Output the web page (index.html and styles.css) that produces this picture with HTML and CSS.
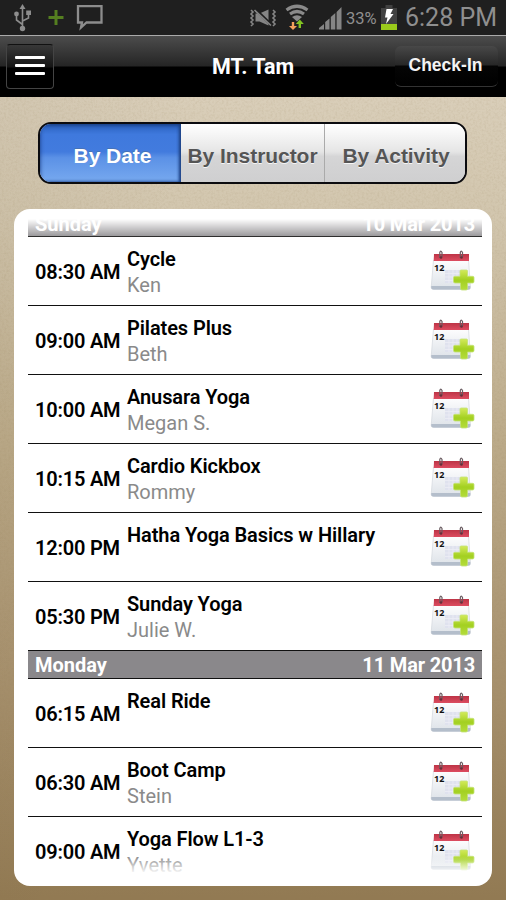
FILE: index.html
```html
<!DOCTYPE html>
<html lang="en">
<head>
<meta charset="utf-8">
<title>MT. Tam</title>
<link rel="stylesheet" href="styles.css">
</head>
<body>
<svg class="defs" aria-hidden="true">
  <defs>
    <linearGradient id="page" x1="0" y1="0" x2="0" y2="1"><stop offset="0" stop-color="#fdfdfe"/><stop offset="1" stop-color="#dde2e8"/></linearGradient>
    <linearGradient id="red" x1="0" y1="0" x2="0" y2="1"><stop offset="0" stop-color="#bd3446"/><stop offset="1" stop-color="#dc4c60"/></linearGradient>
    <linearGradient id="green" x1="0" y1="0" x2="0" y2="1"><stop offset="0" stop-color="#d3ea5a"/><stop offset=".5" stop-color="#a3d021"/><stop offset="1" stop-color="#b4dc3c"/></linearGradient>
    <symbol id="calendar" viewBox="0 0 46 44">
      <path d="M4.500 11H39.500L41.500 38.500Q41.500 40.500 39.500 40.500H4.500Q2.200 40.500 2.200 38.500Z" fill="url(#page)" stroke="#d3d7dc" stroke-width=".7"/>
      <path d="M2.300 37H41.300V38.500Q41.500 40.500 39.500 40.500H4.500Q2.200 40.500 2.200 38.500Z" fill="#b4becb"/>
      <path d="M16 21H36V34H16Z" fill="#dfe2ee"/>
      <path d="M16 24.500H36M16 28H36M16 31.500H36M20 21V34M24 21V34M28 21V34M32 21V34" stroke="#eceef5" stroke-width=".8"/>
      <path d="M5 5H40V12H4.700Z" fill="url(#red)"/>
      <path d="M10.800 9V3.500Q11.600 .8 13 3.500V8M31.300 9V3.500Q32.100 .8 33.500 3.500V8" fill="none" stroke="#6b5d62" stroke-width="1.200"/>
      <circle cx="12" cy="8.500" r="1.300" fill="#64303a"/><circle cx="32.500" cy="8.500" r="1.300" fill="#64303a"/>
      <text x="5" y="21.500" class="cal-num">12</text>
      <path d="M32 21H37.500Q38.500 21 38.500 22V27.300H43.500Q45 27.300 45 28.500V32.500Q45 34 43.500 34H38.500V39.500Q38.500 41 37 41H33Q31.500 41 31.500 39.500V34H26Q24.500 34 24.500 32.500V28.500Q24.500 27.300 26 27.300H31V22Q31 21 32 21Z" fill="url(#green)" stroke="#c3e276" stroke-width=".8"/>
    </symbol>
  </defs>
</svg>

<header class="status">
  <svg class="status-icons" viewBox="0 0 506 36" aria-hidden="true">
    <g fill="none" stroke="#8d8d8d" stroke-width="1.600">
      <path d="M22.500 7V28M22.500 24.500L16.500 20V15M22.500 21L28.500 18V13"/>
      <path d="M78 6.200H101.500V22.500H86.500L81 27.500L82 22.500H78Z" stroke-width="2.300"/>
    </g>
    <g fill="#8d8d8d"><path d="M22.500 4L25.500 9H19.500Z"/><circle cx="22.500" cy="28.500" r="2.700"/><circle cx="16.500" cy="14" r="2.400"/><path d="M26.200 10.500H31V15H26.200Z"/></g>
    <path d="M56 10V25M48.500 17.500H63.500" stroke="#557f20" stroke-width="3"/>
    <path d="M255.500 13.500H259.500L268.500 9.500V25.500L259.500 21.500H255.500Z" fill="#858585"/>
    <path d="M254.500 8.500L271.500 25" stroke="#1f1f1f" stroke-width="3"/>
    <path d="M254.500 10L271 25.500M251 10L253 12L251 14L253 16L251 18L253 20L251 22L253 24L251 26M273 10L275 12L273 14L275 16L273 18L275 20L273 22L275 24L273 26" fill="none" stroke="#858585" stroke-width="1.600"/>
    <g fill="none" stroke="#8a8a8a" stroke-width="3.200"><path d="M286.500 10Q297 2.500 307.500 10M290 14Q297 9 304 14"/></g>
    <path d="M292 17Q297 13.500 302 17L297 21.500Z" fill="#8a8a8a"/>
    <path d="M291.800 22H294.200V26H297L293 30L289 26H291.800Z" fill="#f5a05c"/>
    <path d="M298.600 28V24H295.800L299.800 19.500L303.800 24H301V28Z" fill="#83c422"/>
    <path d="M319 29.500V28L324 24V29.500ZM325.200 29.500V22L329.500 18.500V29.500ZM330.800 29.500V17L335.300 13V29.500ZM336.600 29.500V12L341.500 7V29.500Z" fill="#858585"/>
    <path d="M385.500 5H392.500V8H397V24H381V8H385.500Z" fill="#414141"/>
    <path d="M381 24H397V30H381Z" fill="#9aca1b"/>
    <path d="M386.500 9H393L390.500 14H393.500L386 24L387.500 17.500H385Z" fill="#fff"/>
  </svg>
  <span class="battery">33%</span>
  <span class="clock">6:28 PM</span>
</header>

<nav class="bar">
  <button class="menu" aria-label="Menu"><i></i><i></i><i></i></button>
  <h1 class="title">MT. Tam</h1>
  <button class="checkin">Check-In</button>
</nav>

<main class="content">
  <svg class="grain" aria-hidden="true"><filter id="noise"><feTurbulence type="fractalNoise" baseFrequency=".45" numOctaves="2" seed="4"/><feColorMatrix values="0 0 0 0 .3  0 0 0 0 .22  0 0 0 0 .1  .7 0 0 0 -.28"/></filter><rect width="100%" height="100%" filter="url(#noise)"/></svg>
  <div class="tabs">
    <button class="tab active">By Date</button>
    <button class="tab">By Instructor</button>
    <button class="tab">By Activity</button>
  </div>
  <section class="card">
    <div class="list">
      <div class="day first"><span>Sunday</span><span>10 Mar 2013</span></div>
      <div class="row"><time>08:30 AM</time><div class="info"><b>Cycle</b><span>Ken</span></div><svg class="cal"><use href="#calendar"/></svg></div>
      <div class="row"><time>09:00 AM</time><div class="info"><b>Pilates Plus</b><span>Beth</span></div><svg class="cal"><use href="#calendar"/></svg></div>
      <div class="row"><time>10:00 AM</time><div class="info"><b>Anusara Yoga</b><span>Megan S.</span></div><svg class="cal"><use href="#calendar"/></svg></div>
      <div class="row"><time>10:15 AM</time><div class="info"><b>Cardio Kickbox</b><span>Rommy</span></div><svg class="cal"><use href="#calendar"/></svg></div>
      <div class="row"><time>12:00 PM</time><div class="info"><b>Hatha Yoga Basics w Hillary</b></div><svg class="cal"><use href="#calendar"/></svg></div>
      <div class="row"><time>05:30 PM</time><div class="info"><b>Sunday Yoga</b><span>Julie W.</span></div><svg class="cal"><use href="#calendar"/></svg></div>
      <div class="day"><span>Monday</span><span>11 Mar 2013</span></div>
      <div class="row"><time>06:15 AM</time><div class="info"><b>Real Ride</b></div><svg class="cal"><use href="#calendar"/></svg></div>
      <div class="row"><time>06:30 AM</time><div class="info"><b>Boot Camp</b><span>Stein</span></div><svg class="cal"><use href="#calendar"/></svg></div>
      <div class="row last"><time>09:00 AM</time><div class="info"><b>Yoga Flow L1-3</b><span>Yvette</span></div><svg class="cal"><use href="#calendar"/></svg></div>
    </div>
  </section>
</main>
</body>
</html>
```
FILE: styles.css
```css
* { box-sizing: border-box; }
body { margin: 0; width: 506px; height: 900px; overflow: hidden; font-family: Roboto, sans-serif; display: flex; flex-direction: column; }
button { border: 0; padding: 0; background: none; font: inherit; }
.defs { position: absolute; width: 0; height: 0; }

.status { position: relative; height: 35px; flex: none; background: #1f1f1f; color: #8f8f8f; display: flex; justify-content: flex-end; align-items: center; padding-right: 9px; }
.status-icons { position: absolute; left: 0; top: 0; width: 506px; height: 36px; }
.battery { font-size: 16.500px; width: 32px; margin-right: 27px; padding-top: 1px; white-space: nowrap; }
.clock { font-size: 25px; width: 92px; white-space: nowrap; }

.bar { height: 62px; flex: none; display: grid; grid-template-columns: 1fr auto 1fr; align-items: center; padding: 0 8px 0 6px; border-top: 1px solid #aaa; background: linear-gradient(#4c4c4c 0, #252525 30px, #000 31px, #000); color: #fff; }
.menu { width: 48px; height: 45px; border: 1px solid #444; border-top-color: #111; border-radius: 4px; display: flex; flex-direction: column; align-items: center; justify-content: center; gap: 5px; padding-bottom: 2px; background: linear-gradient(#383838, #151515 22px, #000 23px); }
.menu i { width: 30px; height: 3px; background: #fff; border-radius: 1px; }
.title { margin: 0; font-size: 21.500px; font-weight: 700; padding-left: 2px; }
.checkin { justify-self: end; width: 103px; height: 41px; border-radius: 6px; background: linear-gradient(#484848, #272727 19px, #050505 20px, #000); border-bottom: 1px solid #333; color: #f4f4f4; font: bold 17.500px "Liberation Sans", sans-serif; padding: 0 2px 1px 0; }

.content { position: relative; flex: 1; padding: 25px 14px 14px; background: linear-gradient(100deg, rgba(70, 50, 15, .05), transparent 30%), linear-gradient(#d9ceb9 0, #d2c6ae 120px, #bcab8a 340px, #a99370 560px, #927a53 800px); }
.grain { position: absolute; inset: 0; width: 100%; height: 100%; opacity: .4; }
.tabs { position: relative; width: 429px; height: 62px; margin: 0 0 25px 24px; display: grid; grid-template-columns: 141px 143px 1fr; border: 2px solid #0b0b0f; border-radius: 13px; overflow: hidden; background: #eee; }
.tab { font: bold 21px "Liberation Sans", sans-serif; letter-spacing: -.05px; color: #555; white-space: nowrap; background: linear-gradient(#fff, #e5e5e5 48%, #d5d5d6 56%, #cfcfd0); padding-top: 6px; text-shadow: 0 1px 0 #f6f6f6; }
.tab + .tab + .tab { border-left: 1px solid #aaa; padding-left: 2px; }
.tab.active { padding-left: 4px; color: #fff; background: linear-gradient(#2960bd, #3f79dd 18%, #427bde 48%, #5b91e6 58%, #77a9ef); box-shadow: inset 0 1px 4px #183b7e, inset -2px 0 3px #234b8e; text-shadow: 0 -1px 0 #4772b5; }

.card { position: relative; height: 677px; padding: 10px 10px 10px 14px; border-radius: 16px; background: #fff; }
.list { position: relative; height: 657px; overflow: hidden; }
.list::before, .list::after { content: ""; position: absolute; left: 0; right: 0; z-index: 1; }
.list::before { top: 0; height: 20px; background: linear-gradient(#fff, rgba(255, 255, 255, 0)); }
.list::after { bottom: 0; height: 20px; background: linear-gradient(rgba(255, 255, 255, 0), #fff 90%); }
.day { height: 28px; display: flex; align-items: center; justify-content: space-between; padding: 1px 7px 0; background: #8a888b; border-bottom: 1px solid #111; color: #fff; font-size: 20px; font-weight: 700; }
.day span + span { letter-spacing: -.15px; }
.day.first { margin-top: -10px; }
.day.first span { padding-top: 1px; }
.row { height: 69px; display: grid; grid-template-columns: 92px 1fr 46px; padding: 0 7px; border-bottom: 1px solid #111; }
.row.last { border-bottom: 0; height: 68px; }
.row time { align-self: center; padding-top: 2px; font-size: 20px; font-weight: 600; letter-spacing: -.2px; color: #000; white-space: nowrap; }
.info { padding-top: 9px; display: flex; flex-direction: column; line-height: 27px; font-size: 20px; color: #8a8a8a; white-space: nowrap; }
.info b { color: #000; font-weight: 600; letter-spacing: -.1px; }
.info span { margin-top: -1px; }
.cal { width: 46px; height: 44px; margin-top: 12px; }
.cal-num { font: bold 9px "Open Sans", sans-serif; fill: #111; }
```
